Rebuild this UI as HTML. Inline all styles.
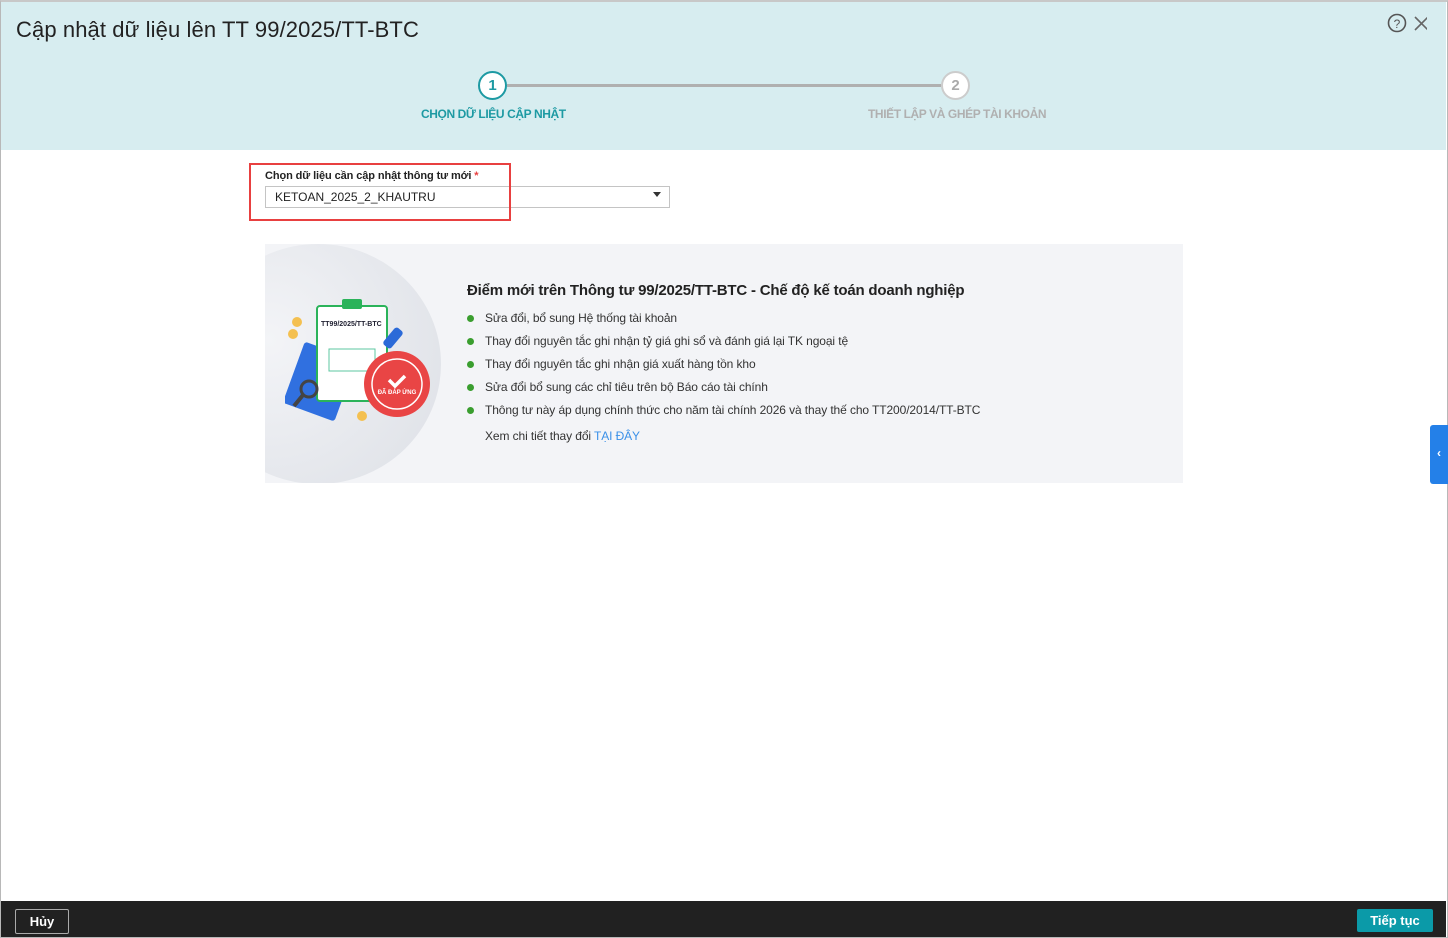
<!DOCTYPE html>
<html><head><meta charset="utf-8"><style>
*{box-sizing:border-box;margin:0;padding:0}
body{width:1448px;height:938px;overflow:hidden;font-family:"Liberation Sans","Noto Sans CJK SC",sans-serif;background:#fff;position:relative;color:#222}
.win{position:absolute;left:0;top:0;width:1448px;height:938px;border:1px solid #b8b8b8;border-top:2px solid #c8c8c8}
.hdr{position:absolute;left:1px;top:2px;width:1445px;height:148px;background:#d7edf0}
.title{position:absolute;left:16px;top:17px;font-size:22px;color:#222;letter-spacing:.1px}
.circ{position:absolute;width:29px;height:29px;border-radius:50%;background:#fff;text-align:center;line-height:25px;font-size:15px;font-weight:bold}
.c1{left:478px;top:71px;border:2px solid #1d9aa3;color:#1d9aa3}
.c2{left:941px;top:71px;border:2px solid #ccc;color:#aaa}
.line{position:absolute;left:507px;top:84px;width:434px;height:3px;background:#b0b0b0}
.lbl{position:absolute;top:107px;font-size:12px;font-weight:bold;letter-spacing:-.4px}
.red{position:absolute;left:249px;top:163px;width:262px;height:58px;border:2px solid #e84040}
.flab{position:absolute;left:265px;top:170px;font-size:11px;font-weight:bold;color:#222;letter-spacing:-.1px}
.sel{position:absolute;left:265px;top:186px;width:405px;height:22px;border:1px solid #c4c4c4;background:#fff;font-size:12px;padding:3px 0 0 9px}
.card{position:absolute;left:265px;top:244px;width:918px;height:239px;background:#f3f4f7;overflow:hidden}
.h{position:absolute;left:467px;top:282px;font-size:15px;font-weight:bold;color:#222;letter-spacing:-.2px}
ul{position:absolute;left:467px;top:311px;list-style:none;font-size:12px;color:#333;letter-spacing:-.1px}
li{height:23px;position:relative;padding-left:18px}
li:before{content:"";position:absolute;left:0;top:4px;width:7px;height:7px;border-radius:50%;background:#3a9e2f}
li.n:before{display:none}
.foot{position:absolute;left:1px;top:901px;width:1445px;height:36px;background:#212121}
.b1{position:absolute;left:15px;top:909px;width:54px;height:25px;border:1px solid #aaa;border-radius:2px;color:#fff;font-size:13px;font-weight:bold;text-align:center;line-height:23px}
.b2{position:absolute;left:1357px;top:909px;width:76px;height:23px;background:#0b9aa8;border-radius:2px;color:#fff;font-size:13px;font-weight:bold;text-align:center;line-height:23px}
.side{position:absolute;left:1430px;top:425px;width:18px;height:59px;background:#2480e8;border-radius:3px 0 0 3px;color:#fff;font-size:12px;font-weight:bold;text-align:center;line-height:57px}
</style></head><body>
<div class="win"></div>
<div class="hdr"></div>
<div class="title">Cập nhật dữ liệu lên TT 99/2025/TT-BTC</div>
<svg style="position:absolute;left:1387px;top:13px" width="40" height="22" viewBox="0 0 40 22"><circle cx="10" cy="10" r="8.5" fill="none" stroke="#555" stroke-width="1.6"/><text x="10" y="15" font-size="12" text-anchor="middle" fill="#555" font-family="Liberation Sans">?</text><path d="M31 3L44 16M44 3L31 16" stroke="#666" stroke-width="1.6" transform="translate(-3,1)"/></svg>
<div class="line"></div>
<div class="circ c1">1</div><div class="circ c2">2</div>
<div class="lbl" style="left:421px;color:#1d9aa3">CHỌN DỮ LIỆU CẬP NHẬT</div>
<div class="lbl" style="left:868px;color:#b0b0b0">THIẾT LẬP VÀ GHÉP TÀI KHOẢN</div>
<div class="flab">Chọn dữ liệu cần cập nhật thông tư mới <span style="color:#e84040">*</span></div>
<div class="sel">KETOAN_2025_2_KHAUTRU<span style="position:absolute;right:8px;top:5px;border-left:4px solid transparent;border-right:4px solid transparent;border-top:5px solid #333"></span></div>
<div class="red"></div>
<div class="card">
<div style="position:absolute;left:-70px;top:0;width:246px;height:240px;border-radius:50%;background:radial-gradient(circle at 30% 40%,#f3f4f7,#dde0e6)"></div>
<svg style="position:absolute;left:20px;top:50px" width="150" height="130" viewBox="0 0 150 130">
<rect x="8" y="55" width="55" height="65" rx="3" fill="#3070e0" transform="rotate(20 35 85)"/>
<rect x="32" y="12" width="70" height="95" rx="3" fill="#fff" stroke="#2bb35a" stroke-width="2"/>
<rect x="57" y="5" width="20" height="10" rx="2" fill="#2bb35a"/>
<text x="36" y="32" font-size="7" font-weight="bold" fill="#223" font-family="Liberation Sans">TT99/2025/TT-BTC</text>
<rect x="44" y="55" width="46" height="22" fill="none" stroke="#5cc7a0"/>
<circle cx="24" cy="95" r="8" fill="none" stroke="#444" stroke-width="3"/><path d="M18 101L9 112" stroke="#444" stroke-width="4"/>
<circle cx="12" cy="28" r="5" fill="#f4c050"/><circle cx="8" cy="40" r="5" fill="#f4c050"/><circle cx="77" cy="122" r="5" fill="#f4c050"/>
<circle cx="112" cy="90" r="33" fill="#e94545"/><circle cx="112" cy="90" r="25" fill="none" stroke="#fff" stroke-width="1.5"/>
<path d="M104 86l6 6 10-10" stroke="#fff" stroke-width="3.5" fill="none"/>
<text x="112" y="100" font-size="6" fill="#fff" text-anchor="middle" font-weight="bold" font-family="Liberation Sans">ĐÃ ĐÁP ỨNG</text>
<rect x="103" y="33" width="10" height="22" rx="3" fill="#2b6ad8" transform="rotate(40 108 44)"/>
</svg>
</div>
<div class="h">Điểm mới trên Thông tư 99/2025/TT-BTC - Chế độ kế toán doanh nghiệp</div>
<ul>
<li>Sửa đổi, bổ sung Hệ thống tài khoản</li>
<li>Thay đổi nguyên tắc ghi nhận tỷ giá ghi sổ và đánh giá lại TK ngoại tệ</li>
<li>Thay đổi nguyên tắc ghi nhận giá xuất hàng tồn kho</li>
<li>Sửa đổi bổ sung các chỉ tiêu trên bộ Báo cáo tài chính</li>
<li>Thông tư này áp dụng chính thức cho năm tài chính 2026 và thay thế cho TT200/2014/TT-BTC</li>
<li style="margin-top:3px" class="n">Xem chi tiết thay đổi <span style="color:#3a90e8">TẠI ĐÂY</span></li>
</ul>
<div class="side">‹</div>
<div class="foot"></div>
<div class="b1">Hủy</div><div class="b2">Tiếp tục</div>
</body></html>
